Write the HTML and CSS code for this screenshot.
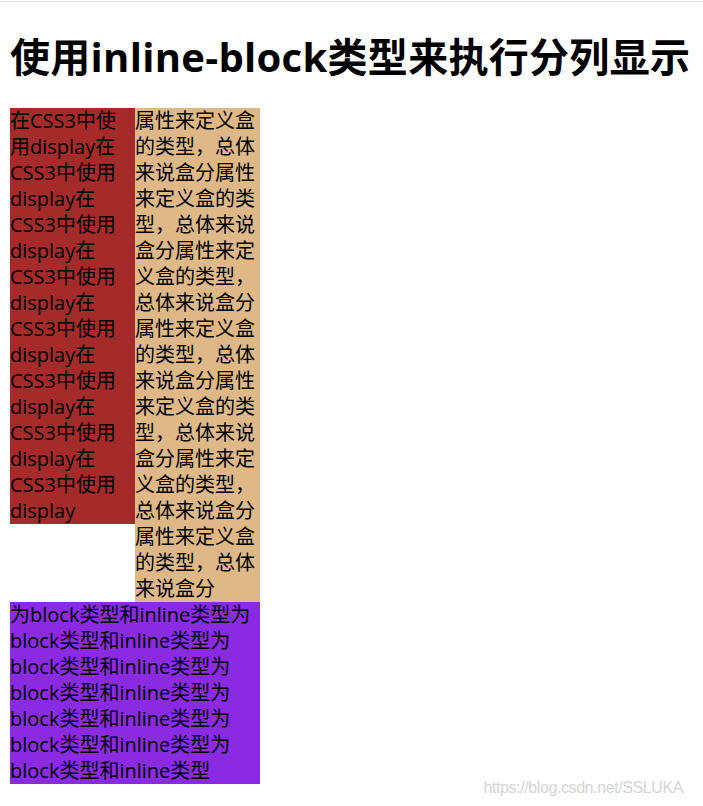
FILE: index.html
```html
<!DOCTYPE html>
<html lang="zh-CN">
<head>
<meta charset="utf-8">
<title>inline-block</title>
<link rel="stylesheet" href="styles.css">
</head>
<body>
<div class="topline"></div>
<h1>使用inline-block类型来执行分列显示</h1>
<div class="row"><div class="col brown">在CSS3中使用display在CSS3中使用display在CSS3中使用display在CSS3中使用display在CSS3中使用display在CSS3中使用display在CSS3中使用display在CSS3中使用display</div><div class="col tan">属性来定义盒的类型，总体来说盒分属性来定义盒的类型，总体来说盒分属性来定义盒的类型，总体来说盒分属性来定义盒的类型，总体来说盒分属性来定义盒的类型，总体来说盒分属性来定义盒的类型，总体来说盒分属性来定义盒的类型，总体来说盒分</div></div>
<div class="block violet">为block类型和inline类型为block类型和inline类型为block类型和inline类型为block类型和inline类型为block类型和inline类型为block类型和inline类型为block类型和inline类型</div>
<div class="watermark">https://blog.csdn.net/SSLUKA</div>
</body>
</html>
```
FILE: styles.css
```css
html, body {
  margin: 0;
  padding: 0;
  background: #fff;
}
body {
  padding: 0 10px;
  font-family: "Open Sans", "Noto Sans CJK SC", sans-serif;
  font-size: 20px;
  line-height: 26px;
  color: #000;
  position: relative;
  min-height: 806px;
  box-sizing: border-box;
}
.topline {
  position: absolute;
  left: 0;
  right: 0;
  top: 1px;
  height: 1px;
  background: #e3e3e3;
}
h1 {
  margin: 0;
  padding: 30px 0 25px;
  font-size: 40px;
  line-height: 53px;
  font-weight: bold;
  letter-spacing: 0.3px;
  white-space: nowrap;
}
.row {
  font-size: 0;
  line-height: 0;
}
.col {
  display: inline-block;
  vertical-align: top;
  width: 125px;
  font-size: 20px;
  line-height: 26px;
}
.brown { background: #a52a2a; }
.tan { background: #deb887; }
.block {
  width: 250px;
}
.violet { background: #8a2be2; }
.watermark {
  position: absolute;
  right: 20px;
  top: 778px;
  font-family: "Liberation Sans", Arial, sans-serif;
  font-size: 16px;
  line-height: 20px;
  letter-spacing: -0.4px;
  color: #d6d6d6;
}
```
